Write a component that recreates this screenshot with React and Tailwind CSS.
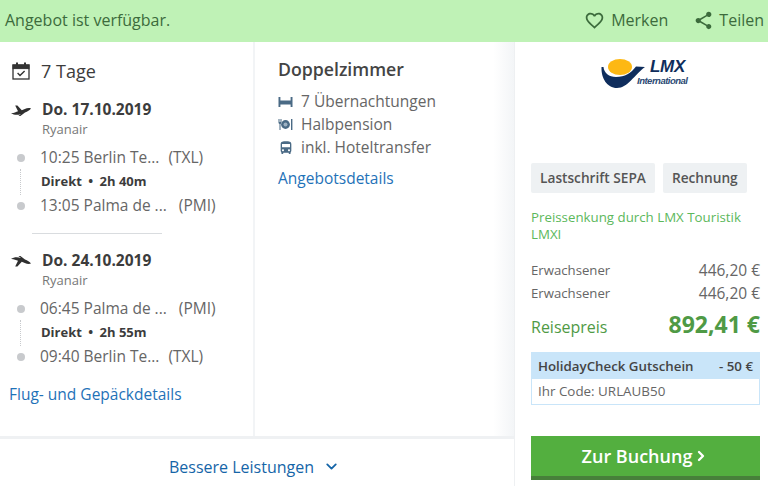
import { ChevronDown, ChevronRight } from "lucide-react";
import { MdFavoriteBorder, MdShare, MdDirectionsBus } from "react-icons/md";

const Plane = ({ flip }) => (
  <svg width="20" height="11" viewBox="0 0 20 11" className={`shrink-0 ${flip ? "-scale-y-100" : ""}`}>
    <path d="M0 8 C3 10.4 7 10.2 10 9 L7.4 11 L9.4 11 L14 7.4 C16.4 6.4 18.8 5 20 3.4 C18 2.6 15.6 3.2 13.8 4 L10.8 5.2 L6.4 0.6 L4.2 0.6 L7 6.2 C5 7 2.6 8.2 0 8 Z" fill="#2f2f2f" />
  </svg>
);

const Bed = () => (
  <svg width="15" height="12" viewBox="0 0 15 12" className="shrink-0">
    <path d="M0.5 1 H2.4 V4.5 H12.6 V1 H14.5 V11 H12.6 V8.5 H2.4 V11 H0.5 Z" fill="#4a6a85" />
  </svg>
);

const Calendar = () => (
  <svg width="18" height="18" viewBox="0 0 18 18" fill="none" stroke="#333" className="shrink-0">
    <rect x="1" y="3" width="16" height="14" strokeWidth="1.3" />
    <rect x="1" y="3" width="16" height="3.6" fill="#333" strokeWidth="1" />
    <path d="M5 0.6 V4 M13 0.6 V4" strokeWidth="2" />
    <path d="M5.6 11 L8 13.4 L12.6 9" strokeWidth="1.4" />
  </svg>
);

const Food = () => (
  <svg width="15" height="13" viewBox="0 0 15 13" className="shrink-0">
    <circle cx="7.5" cy="6.5" r="4.4" fill="#4a6a85" />
    <circle cx="7.5" cy="6.5" r="2" fill="#9db1c2" />
    <path d="M0.5 1 V4.5 C0.5 5.4 1 5.8 1.5 6 V12 H2.5 V6 C3 5.8 3.5 5.4 3.5 4.5 V1 H2.8 V4 H2.3 V1 H1.7 V4 H1.2 V1 Z" fill="#4a6a85" />
    <rect x="13" y="1" width="1.4" height="11" fill="#4a6a85" />
  </svg>
);

const Leg = ({ time, place, code, gapClass }) => (
  <div className="flex items-center h-[24px] text-[15.5px] text-[#666]">
    <span className="w-[8px] h-[8px] rounded-full bg-[#c8cacd] ml-[17px] mr-[15px] shrink-0" />
    <span className="whitespace-nowrap">{time} {place}</span>
    <span className={`whitespace-nowrap ${gapClass}`}>{code}</span>
  </div>
);

const Flight = ({ icon, date, from, to, duration }) => (
  <div>
    <div className="flex items-center h-[22px] pl-[11px]">
      <span className="w-[31px] flex">{icon}</span>
      <span className="text-[15.5px] font-bold text-[#3c3c3c] leading-none">{date}</span>
    </div>
    <div className="pl-[42px] text-[13px] text-[#777] leading-[16px] mb-[9px]">Ryanair</div>
    <Leg {...from} />
    <div className="flex items-center h-[24px] relative">
      <span className="absolute left-[20px] top-[-1px] h-[26px] border-l border-dotted border-[#c8cacd]" />
      <span className="pl-[41px] text-[13px] font-bold text-[#3c3c3c] whitespace-nowrap">
        Direkt <span className="mx-[3px]">•</span> {duration}
      </span>
    </div>
    <Leg {...to} />
  </div>
);

const Logo = () => (
  <div className="relative w-[86px] h-[32px]">
    <svg width="86" height="32" viewBox="0 0 86 32" className="absolute left-0 top-0">
      <path d="M0.5 9 C0 20 6 30 16 30 C27 30 33 17 44 9 L35 8.5 C30 15 24 19 15 19 C8 19 3 15 2.5 9 Z" fill="#0f2d5c" />
      <ellipse cx="19" cy="9" rx="12" ry="8" fill="#fdb813" />
    </svg>
    <span className="absolute left-[49px] top-[-1px] text-[17px] leading-[20px] font-bold italic text-[#0f2d5c] tracking-[-0.3px] font-['Liberation_Sans',sans-serif]">LMX</span>
    <span className="absolute left-[36px] top-[17px] text-[9.5px] leading-[12px] font-bold italic text-[#2c4a74] tracking-[-0.5px] whitespace-nowrap font-['Liberation_Sans',sans-serif]">International</span>
  </div>
);

const App = () => {
  return (
    <div className="w-[768px] h-[486px] overflow-hidden bg-white flex flex-col font-['Open_Sans',sans-serif]">
      {/* Statusleiste */}
      <div className="h-[42px] shrink-0 bg-[#bff2b6] flex items-center justify-between text-[#3c6b3c] text-[16px] pb-[2px]">
        <span className="pl-[5px]">Angebot ist verfügbar.</span>
        <div className="flex items-center">
          <MdFavoriteBorder size={21} className="mr-[6px]" />
          <span className="mr-[25px]">Merken</span>
          <MdShare size={21} className="mr-[5px]" />
          <span className="mr-[4px]">Teilen</span>
        </div>
      </div>

      <div className="flex flex-1 min-h-0">
        <div className="w-[515px] flex flex-col shrink-0 border-r border-[#eef0f2]">
          <div className="h-[394px] flex shrink-0">
            {/* Flug */}
            <div className="w-[255px] shrink-0 border-r-2 border-[#f2f4f6] pt-[17px]">
              <div className="flex items-center h-[24px] pl-[12px] mb-[16px]">
                <Calendar />
                <span className="ml-[11px] text-[18px] font-medium text-[#3c3c3c]">7 Tage</span>
              </div>
              <Flight
                icon={<Plane />}
                date="Do. 17.10.2019"
                from={{ time: "10:25", place: "Berlin Te...", code: "(TXL)", gapClass: "ml-[9px]" }}
                to={{ time: "13:05", place: "Palma de ...", code: "(PMI)", gapClass: "ml-[12px]" }}
                duration="2h 40m"
              />
              <div className="h-[1px] w-[130px] bg-[#d9dcdf] ml-[32px] mt-[15px] mb-[16px]" />
              <Flight
                icon={<Plane flip />}
                date="Do. 24.10.2019"
                from={{ time: "06:45", place: "Palma de ...", code: "(PMI)", gapClass: "ml-[12px]" }}
                to={{ time: "09:40", place: "Berlin Te...", code: "(TXL)", gapClass: "ml-[9px]" }}
                duration="2h 55m"
              />
              <div className="pl-[9px] mt-[13px] text-[15.5px] leading-[24px] text-[#1f72b8]">Flug- und Gepäckdetails</div>
            </div>

            {/* Zimmer */}
            <div className="flex-1 pl-[23px] pt-[15px] bg-gradient-to-r from-white from-[92%] to-[#f3f5f7]">
              <div className="text-[17.7px] font-semibold text-[#444] leading-[24px] mb-[9px]">Doppelzimmer</div>
              <div className="flex flex-col text-[15.5px] text-[#666] leading-[23px]">
                <div className="flex items-center">
                  <span className="mr-[8px] flex"><Bed /></span>
                  7 Übernachtungen
                </div>
                <div className="flex items-center">
                  <span className="mr-[8px] flex"><Food /></span>
                  Halbpension
                </div>
                <div className="flex items-center">
                  <MdDirectionsBus size={16} className="text-[#4a6a85] mr-[7px]" />
                  inkl. Hoteltransfer
                </div>
              </div>
              <div className="mt-[7px] text-[15.5px] leading-[24px] text-[#1f72b8]">Angebotsdetails</div>
            </div>
          </div>

          {/* Mehr anzeigen */}
          <div className="flex-1 border-t-[3px] border-[#eff1f3] pt-[8px] flex items-center justify-center gap-[9px] text-[16px] font-medium text-[#1565a8] pr-[5px]">
            Bessere Leistungen
            <ChevronDown size={17} strokeWidth={2.6} />
          </div>
        </div>

        {/* Preis */}
        <div className="flex-1 pl-[16px] pr-[8px] flex flex-col">
          <div className="flex justify-center h-[46px] pt-[16px] pr-[3px]">
            <Logo />
          </div>
          <div className="flex gap-[8px] mt-[75px]">
            <span className="h-[30px] px-[9px] rounded-[2px] bg-[#eef1f3] text-[13.7px] font-semibold text-[#555] flex items-center">Lastschrift SEPA</span>
            <span className="h-[30px] px-[9px] rounded-[2px] bg-[#eef1f3] text-[13.7px] font-semibold text-[#555] flex items-center">Rechnung</span>
          </div>
          <div className="mt-[16px] text-[13.3px] leading-[17px] text-[#5cb85c]">
            Preissenkung durch LMX Touristik
            <br />
            LMXI
          </div>
          <div className="mt-[16px] flex justify-between items-center h-[23px] text-[#666]">
            <span className="text-[13.2px]">Erwachsener</span>
            <span className="text-[15.5px]">446,20 €</span>
          </div>
          <div className="flex justify-between items-center h-[23px] text-[#666]">
            <span className="text-[13.2px]">Erwachsener</span>
            <span className="text-[15.5px]">446,20 €</span>
          </div>
          <div className="mt-[3px] flex justify-between items-center h-[34px] text-[#4f9a45]">
            <span className="text-[16px] font-medium pt-[3px]">Reisepreis</span>
            <span className="text-[23px] font-bold pb-[1px]">892,41 €</span>
          </div>
          <div className="mt-[10px] border border-[#c9e5f9]">
            <div className="h-[26px] bg-[#c9e5f9] px-[6px] pt-[1px] flex justify-between items-center text-[13.3px] font-semibold text-[#444]">
              <span>HolidayCheck Gutschein</span>
              <span>- 50 €</span>
            </div>
            <div className="h-[25px] px-[6px] flex items-center text-[13.4px] text-[#666]">Ihr Code: URLAUB50</div>
          </div>
          <div className="mt-[31px] h-[44px] bg-[#53af3f] border-b-4 border-[#47803a] flex items-center justify-center gap-[1px] text-white text-[18px] font-semibold">
            Zur Buchung
            <ChevronRight size={16} strokeWidth={3.5} />
          </div>
        </div>
      </div>
    </div>
  );
};

export default App;
